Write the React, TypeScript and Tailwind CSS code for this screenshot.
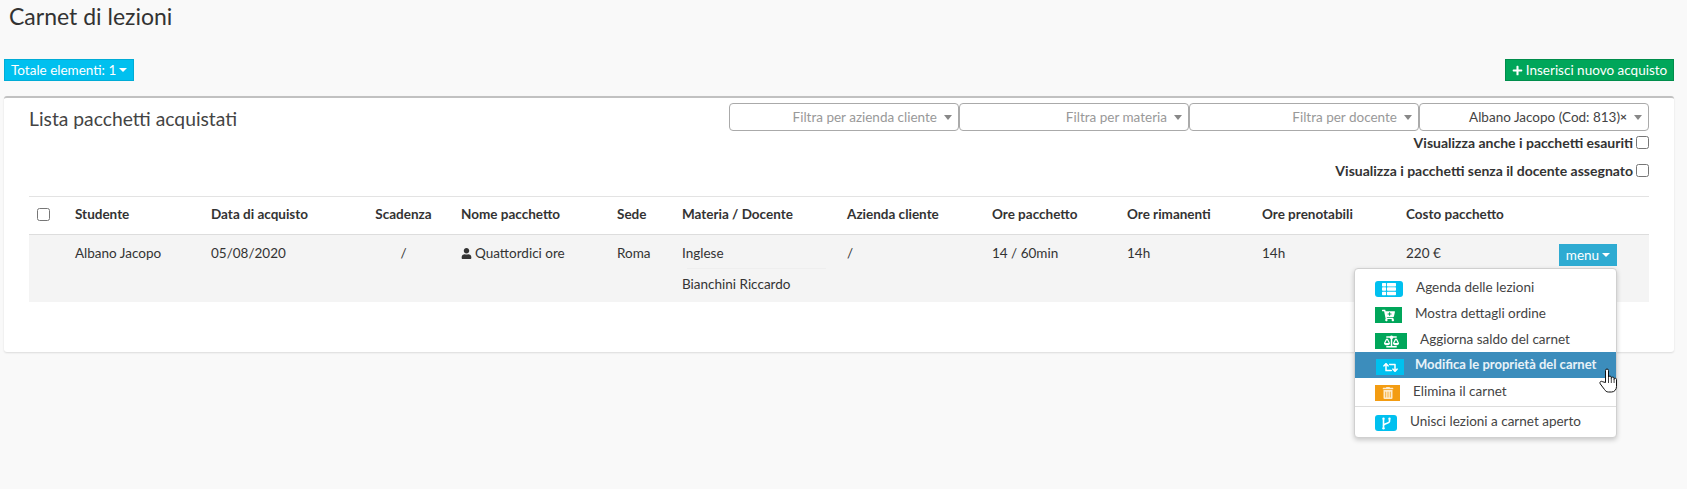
import type { ReactNode } from 'react'
import { FaThList, FaCartPlus, FaBalanceScale, FaRetweet, FaTrashAlt, FaUser, FaPlus } from 'react-icons/fa'

const font = "font-['Lato','Noto_Sans',sans-serif]"

function Caret({ className = '' }: { className?: string }) {
  return <span className={`inline-block w-0 h-0 border-x-[4px] border-x-transparent border-t-[4px] ${className}`} />
}

function Checkbox() {
  return <span className="block w-[13px] h-[13px] border border-[#767676] rounded-[2.5px] bg-white" />
}

function Filter({ label, dark, clear }: { label: string; dark?: boolean; clear?: boolean }) {
  return (
    <div className={`h-[28px] w-[230px] border border-[#aaaaaa] rounded-[4px] bg-white flex items-center justify-end pr-[6px] text-[13.5px] ${dark ? 'text-[#444444]' : 'text-[#999999]'}`}>
      <span>{label}</span>
      {clear && <span className="text-[#444444] text-[12px] font-bold">×</span>}
      <Caret className="ml-[7px] border-t-[#888888] border-t-[5px]" />
    </div>
  )
}

function MenuItem({ icon, iconClass, label, active, gap }: { icon: ReactNode; iconClass: string; label: string; active?: boolean; gap: string }) {
  return (
    <div className={`h-[26px] flex items-center pl-[20px] ${active ? 'bg-[#3c8dbc] text-[#e8f2f8] font-bold text-[13px]' : 'text-[#444444] text-[13.5px]'}`}>
      <span className={`h-[16px] mt-[4px] flex items-center justify-center text-white ${iconClass}`}>{icon}</span>
      <span className={gap}>{label}</span>
    </div>
  )
}

function BranchIcon() {
  return (
    <svg width="11" height="13" viewBox="0 0 11 13" fill="none" stroke="white" strokeWidth="1.6">
      <path d="M2.5 2.5V10.5" />
      <path d="M8.5 2.5V4.5C8.5 6.5 2.5 6.5 2.5 8.5" />
      <circle cx="2.5" cy="1.8" r="1.2" fill="white" stroke="none" />
      <circle cx="8.5" cy="1.8" r="1.2" fill="white" stroke="none" />
      <circle cx="2.5" cy="11.2" r="1.2" fill="white" stroke="none" />
    </svg>
  )
}

function HandCursor() {
  return (
    <svg className="absolute left-[244px] top-[99px]" width="19" height="25" viewBox="0 0 19 25" fill="white" stroke="#111111" strokeWidth="1" strokeLinejoin="round">
      <path d="M6.5 14.5V2.5a1.5 1.5 0 0 1 3 0V9.5a1.4 1.4 0 0 1 2.8 0V10.5a1.4 1.4 0 0 1 2.8 0V11.5a1.2 1.2 0 0 1 2.4 0V18.5c0 3-2 5.5-5 5.5H9.5c-2 0-3-1-4-2.5L1.2 15.8c-1-2 1-3.2 2.6-2Z" />
      <path d="M9.5 10V15M12.3 10.5V15M15.1 11.5V15" fill="none" strokeWidth="0.8" />
    </svg>
  )
}

const headers = [
  ['Studente', 'w-[136px]'],
  ['Data di acquisto', 'w-[150px]'],
  ['Scadenza', 'w-[100px] pr-[15px] text-center'],
  ['Nome pacchetto', 'w-[156px]'],
  ['Sede', 'w-[65px]'],
  ['Materia / Docente', 'w-[165px]'],
  ['Azienda cliente', 'w-[145px]'],
  ['Ore pacchetto', 'w-[135px]'],
  ['Ore rimanenti', 'w-[135px]'],
  ['Ore prenotabili', 'w-[144px]'],
  ['Costo pacchetto', 'w-[153px]'],
]

export default function App() {
  return (
    <div className={`${font} h-[489px] bg-[#f9f9f9] text-[#333333] text-[13.5px] overflow-hidden`}>
      <h1 className="text-[23px] leading-[30px] pt-[1px] pl-[9px] text-[#333333]">Carnet di lezioni</h1>

      <div className="flex justify-between items-center mt-[28px] pl-[4px] pr-[13px]">
        <button className="h-[22px] px-[6px] bg-[#00c0ef] border border-[#00acd6] text-white text-[13.5px] flex items-center gap-[3px]">
          Totale elementi: 1 <Caret className="border-t-white" />
        </button>
        <button className="h-[22px] w-[169px] justify-center bg-[#00a65a] border border-[#008d4c] text-white text-[13.5px] flex items-center gap-[3px]">
          <FaPlus className="text-[11px]" /> Inserisci nuovo acquisto
        </button>
      </div>

      <div className="mt-[15px] ml-[4px] mr-[13px] h-[256px] bg-white rounded-[3px] border-t-[2px] border-[#c1c1c1] shadow-[0_1px_2px_rgba(0,0,0,0.12)] pl-[25px] pr-[25px] pt-[5px]">
        <div className="flex justify-between">
          <h2 className="text-[19.3px] leading-[28px] text-[#444444] pt-[2px]">Lista pacchetti acquistati</h2>
          <div className="flex flex-col items-end">
            <div className="flex">
              <Filter label="Filtra per azienda cliente" />
              <Filter label="Filtra per materia" />
              <Filter label="Filtra per docente" />
              <Filter label="Albano Jacopo (Cod: 813)" dark clear />
            </div>
            <label className="flex items-center font-bold text-[14px] h-[28px] -mt-[3px] text-[#333333]">
              Visualizza anche i pacchetti esauriti
              <span className="ml-[3px]"><Checkbox /></span>
            </label>
            <label className="flex items-center font-bold text-[14px] h-[28px] text-[#333333]">
              Visualizza i pacchetti senza il docente assegnato
              <span className="ml-[3px]"><Checkbox /></span>
            </label>
          </div>
        </div>

        <div className="mt-[12px] border-t border-[#e3e3e3]">
          <div className="h-[38px] pb-[2px] flex items-center border-b border-[#dddddd] font-bold">
            <div className="w-[46px] pl-[8px]">
              <Checkbox />
            </div>
            {headers.map(([h, w]) => (
              <div key={h} className={w}>{h}</div>
            ))}
          </div>
          <div className="relative h-[67px] bg-[#f4f4f4] flex pt-[8px]">
            <div className="w-[46px]" />
            <div className="w-[136px]">Albano Jacopo</div>
            <div className="w-[150px]">05/08/2020</div>
            <div className="w-[100px] pr-[15px] text-center">/</div>
            <div className="w-[156px] flex items-center h-[20px] gap-[3px]"><FaUser className="text-[11px]" />Quattordici ore</div>
            <div className="w-[65px]">Roma</div>
            <div className="w-[165px]">
              <div className="pb-[5px]">Inglese</div>
              <div className="ml-[5px] w-[139px] border-t border-[#eeeeee]" />
              <div className="pt-[5px]">Bianchini Riccardo</div>
            </div>
            <div className="w-[145px]">/</div>
            <div className="w-[135px]">14 / 60min</div>
            <div className="w-[135px]">14h</div>
            <div className="w-[144px]">14h</div>
            <div className="w-[153px]">220 €</div>
            <button className="h-[22px] w-[58px] mt-[1px] bg-[#2eabd2] text-white flex items-center justify-center gap-[3px]">
              menu <Caret className="border-t-white" />
            </button>

            <div className="absolute left-[1325px] top-[33px] w-[263px] h-[170px] bg-white border border-[#d0d0d0] rounded-[4px] shadow-[0_2px_5px_rgba(0,0,0,0.2)] pt-[5px] z-10">
              <MenuItem icon={<FaThList className="text-[14px] w-[18px]" />} iconClass="w-[28px] bg-[#00c0ef] rounded-[3px]" label="Agenda delle lezioni" gap="ml-[13px]" />
              <MenuItem icon={<FaCartPlus className="text-[13px]" />} iconClass="w-[27px] bg-[#00a65a]" label="Mostra dettagli ordine" gap="ml-[13px]" />
              <MenuItem icon={<FaBalanceScale className="text-[15px]" />} iconClass="w-[32px] bg-[#00a65a]" label="Aggiorna saldo del carnet" gap="ml-[13px]" />
              <MenuItem active icon={<FaRetweet className="text-[15px]" />} iconClass="w-[28px] ml-[1px] bg-[#00c0ef]" label="Modifica le proprietà del carnet" gap="ml-[11px]" />
              <MenuItem icon={<FaTrashAlt className="text-[12px] text-[#fdeacb]" />} iconClass="w-[25px] bg-[#f39c12]" label="Elimina il carnet" gap="ml-[13px]" />
              <div className="border-t border-[#dddddd] mt-[2px] mb-[1px]" />
              <MenuItem icon={<BranchIcon />} iconClass="w-[22px] bg-[#00c0ef] rounded-[3px]" label="Unisci lezioni a carnet aperto" gap="ml-[13px]" />
              <HandCursor />
            </div>
          </div>
        </div>
      </div>
    </div>
  )
}
